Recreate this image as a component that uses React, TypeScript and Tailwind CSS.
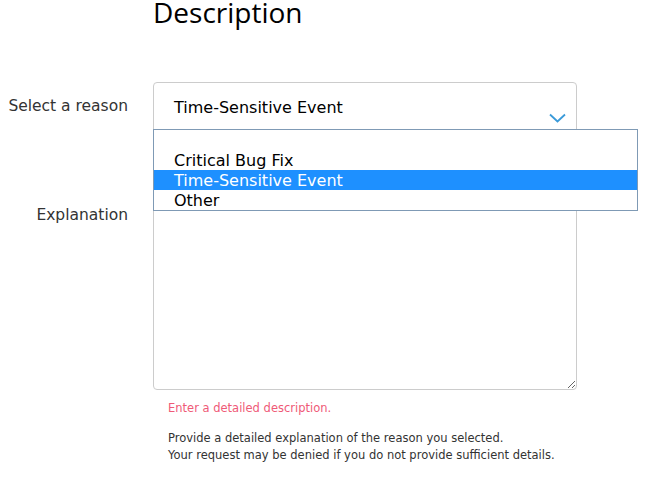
import React from 'react';

const OPTIONS = ['', 'Critical Bug Fix', 'Time-Sensitive Event', 'Other'];

function Chevron() {
  return (
    <svg width="17" height="10" viewBox="0 0 17 10" fill="none" className="text-[#3a9ad9]">
      <path d="M1 1.5 L8.5 8.5 L16 1.5" stroke="currentColor" strokeWidth="1.8" />
    </svg>
  );
}

export default function App() {
  const selected = 'Time-Sensitive Event';

  return (
    <div className="relative min-h-[477px] w-[649px] bg-white text-[#333] font-['DejaVu_Sans',sans-serif]">
      <div className="grid grid-cols-[128px_424px] gap-x-[25px]">
        <div />
        <h1 className="-mt-[2px] font-['Open_Sans',sans-serif] text-[28px] leading-[28px] text-black">Description</h1>

        {/* reason */}
        <label className="mt-[56px] pt-[14px] text-right text-[15.5px] leading-[20px]">Select a reason</label>
        <div className="mt-[56px] relative h-[64px] rounded-[4px] border border-[#cccccc] bg-white">
          <div className="pl-[20px] pt-[14px] text-[16px] leading-[22px] text-black">{selected}</div>
          <div className="absolute right-[10px] top-[30px]">
            <Chevron />
          </div>
        </div>

        {/* explanation */}
        <label className="mt-[45px] pt-[14px] text-right text-[15.5px] leading-[20px]">Explanation</label>
        <div className="mt-[45px]">
          <textarea className="block h-[199px] w-[424px] rounded-[4px] border border-[#cccccc] bg-white" />
          <div className="pl-[15px] pt-[10px] text-[11.5px] leading-[17px] text-[#ef5a77]">
            Enter a detailed description.
          </div>
          <div className="pl-[15px] pt-[13px] text-[11.5px] leading-[17px] text-[#333]">
            <p>Provide a detailed explanation of the reason you selected.</p>
            <p>Your request may be denied if you do not provide sufficient details.</p>
          </div>
        </div>
      </div>

      {/* open dropdown list */}
      <ul className="absolute left-[153px] top-[129px] w-[485px] border border-[#7f9ab5] bg-white text-[16px] leading-[20px] text-black">
        {OPTIONS.map((o, i) => (
          <li
            key={i}
            className={
              o === selected
                ? 'h-[20px] bg-[#1e90ff] pl-[20px] pt-[1px] text-white'
                : 'h-[20px] pl-[20px] pt-[1px]'
            }
          >
            {o}
          </li>
        ))}
      </ul>
    </div>
  );
}
